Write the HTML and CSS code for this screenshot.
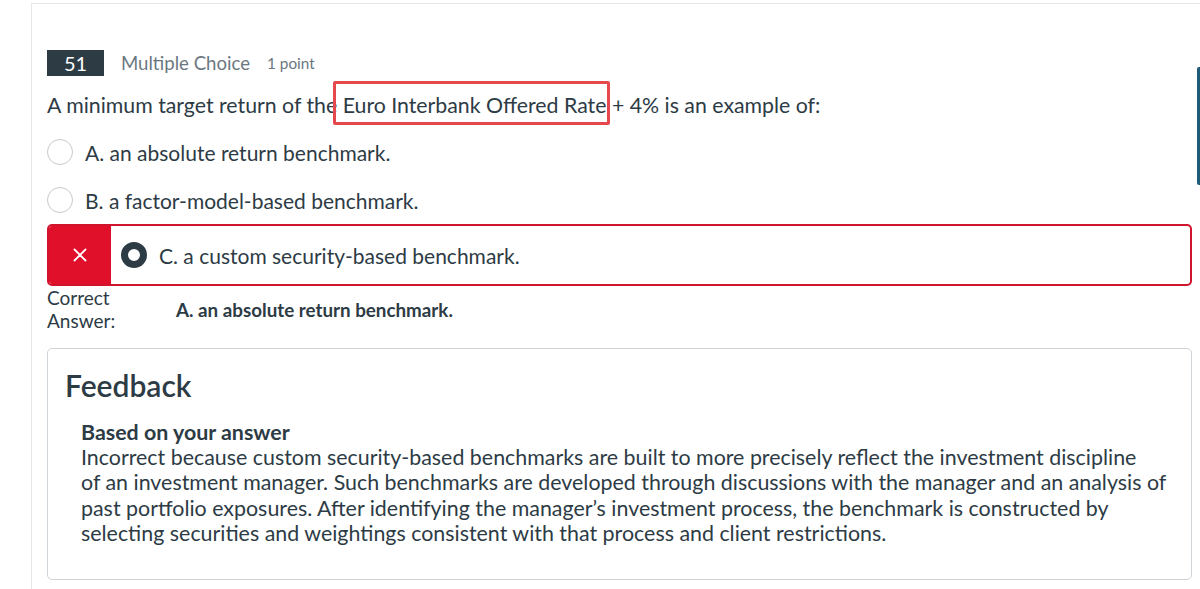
FILE: index.html
```html
<!DOCTYPE html>
<html>
<head>
<meta charset="utf-8">
<link rel="stylesheet" href="styles.css">
</head>
<body>
<div class="page">
  <div class="card">
    <div class="qhead">
      <span class="qnum">51</span>
      <span class="qtype">Multiple Choice</span>
      <span class="qpts">1 point</span>
    </div>
    <p class="qtext">A minimum target return of the <span class="mark">Euro Interbank Offered Rate</span> + 4% is an example of:</p>
    <div class="options">
      <div class="opt"><span class="radio"></span><span>A. an absolute return benchmark.</span></div>
      <div class="opt"><span class="radio"></span><span>B. a factor-model-based benchmark.</span></div>
      <div class="opt-wrong">
        <div class="xcell"><svg width="14" height="14" viewBox="0 0 14 14"><path d="M1.5 1.5 L12.5 12.5 M12.5 1.5 L1.5 12.5" stroke="#ffffff" stroke-width="1.8" stroke-linecap="round"/></svg></div>
        <div class="wrong-inner"><span class="radio sel"></span><span>C. a custom security-based benchmark.</span></div>
      </div>
    </div>
    <div class="correct">
      <div class="clabel">Correct<br>Answer:</div>
      <div class="cans">A. an absolute return benchmark.</div>
    </div>
    <div class="feedback">
      <h2 class="fb-title">Feedback</h2>
      <div class="fb-body">
        <h3 class="fb-sub">Based on your answer</h3>
        <p class="fb-text">Incorrect because custom security-based benchmarks are built to more precisely reflect the investment discipline<br>of an investment manager. Such benchmarks are developed through discussions with the manager and an analysis of past portfolio exposures. After identifying the manager’s investment process, the benchmark is constructed by selecting securities and weightings consistent with that process and client restrictions.</p>
      </div>
    </div>
  </div>
  <div class="sidebar-bar"></div>
</div>
</body>
</html>
```

FILE: styles.css
```css
* { box-sizing: border-box; }
html, body {
  margin: 0;
  padding: 0;
  background: #ffffff;
  overflow: hidden;
}
body {
  font-family: Lato, "Liberation Sans", sans-serif;
  color: #2d3b45;
  width: 1200px;
  height: 589px;
}
.page {
  position: relative;
  width: 1200px;
  height: 589px;
  padding: 3px 0 0 31px;
}
.card {
  width: 1200px;
  height: 620px;
  border: 1px solid #e6e6e6;
  border-right: none;
  padding: 46px 0 0 15px;
}
.qhead {
  display: flex;
  align-items: center;
  height: 26px;
}
.qnum {
  display: inline-flex;
  align-items: center;
  justify-content: center;
  width: 57px;
  height: 26px;
  background: #2d3b45;
  color: #ffffff;
  font-size: 20px;
  line-height: 26px;
}
.qtype {
  margin-left: 17px;
  font-size: 18.6px;
  color: #6b7780;
}
.qpts {
  margin-left: 17px;
  font-size: 15.3px;
  color: #6b7780;
}
.qtext {
  margin: 16px 0 0 0;
  font-size: 21.3px;
  line-height: 26px;
}
.mark {
  position: relative;
}
.mark::after {
  content: "";
  position: absolute;
  left: -10px;
  right: -4px;
  top: -11px;
  bottom: -7px;
  border: 3px solid #e5484d;
  border-radius: 2px;
}
.options {
  margin-top: 10px;
}
.opt {
  display: flex;
  align-items: center;
  gap: 12px;
  height: 48px;
  font-size: 21px;
}
.radio {
  width: 26px;
  height: 26px;
  border-radius: 50%;
  border: 1px solid #c8c8c8;
  flex: none;
}
.opt-wrong {
  display: flex;
  width: 1145px;
  height: 62px;
  border: 2px solid #d0142c;
  border-radius: 5px;
  overflow: hidden;
  font-size: 21px;
}
.xcell {
  width: 62px;
  flex: none;
  background: #e0102b;
  display: flex;
  align-items: center;
  justify-content: center;
}
.wrong-inner {
  display: flex;
  align-items: center;
  gap: 12px;
  padding-left: 10px;
}
.radio.sel {
  width: 26px;
  height: 26px;
  border: 7px solid #2d3b45;
}
.correct {
  display: flex;
  align-items: center;
  margin-top: 0;
  font-size: 19px;
}
.clabel {
  width: 129px;
  line-height: 23px;
}
.cans {
  font-weight: 700;
  font-size: 18.8px;
}
.feedback {
  width: 1145px;
  height: 232px;
  margin-top: 16px;
  border: 1px solid #cfd4d8;
  border-radius: 5px;
  padding: 18px 0 0 17px;
}
.fb-title {
  margin: 0;
  font-size: 30px;
  font-weight: 600;
  line-height: 36px;
}
.fb-body {
  margin-top: 17px;
  padding-left: 16px;
  padding-right: 20px;
}
.fb-sub {
  margin: 0;
  font-size: 21.4px;
  font-weight: 700;
  line-height: 25px;
}
.fb-text {
  margin: 0;
  font-size: 21.4px;
  line-height: 25.4px;
}
.sidebar-bar {
  position: absolute;
  left: 1197px;
  top: 67px;
  width: 4px;
  height: 118px;
  background: #1d5b78;
  border-radius: 2px 0 0 2px;
}
```
